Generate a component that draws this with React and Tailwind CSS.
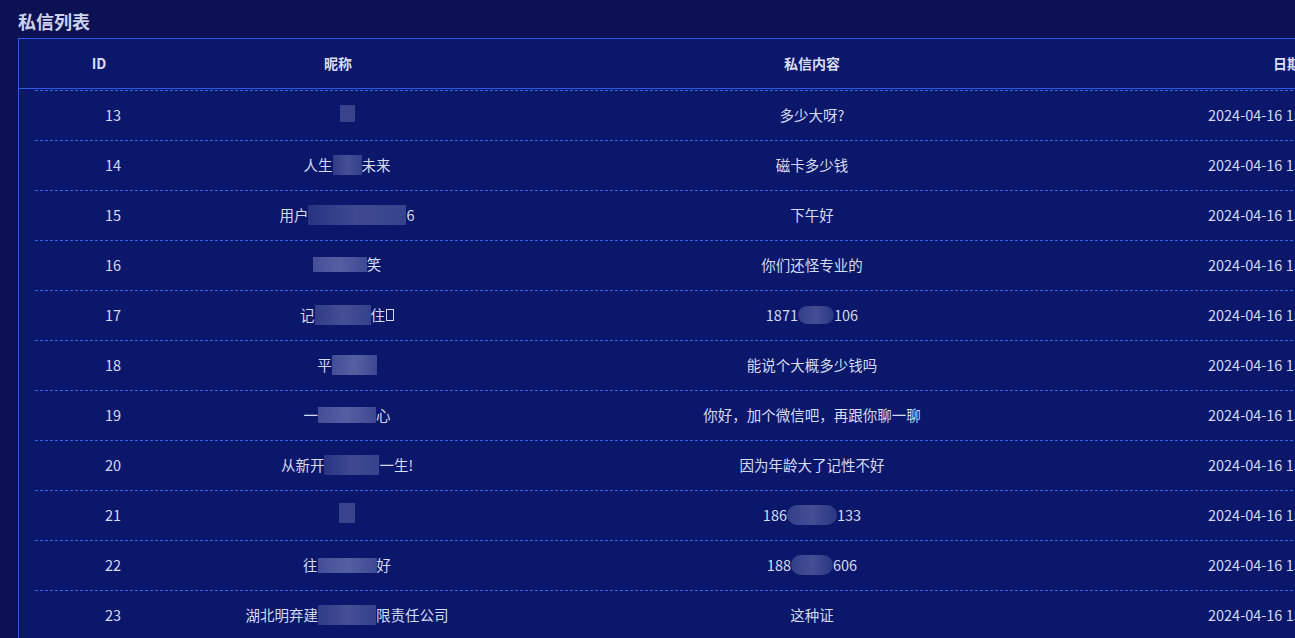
const rows = [
  { id: 13, name: [{ m: "w-[15px] h-[17px]", tone: "a" }], msg: ["多少大呀?"] },
  { id: 14, name: ["人生", { m: "w-[29px] h-[20px]", tone: "b" }, "未来"], msg: ["磁卡多少钱"] },
  { id: 15, name: ["用户", { m: "w-[98px] h-[20px]", tone: "c" }, "6"], msg: ["下午好"] },
  { id: 16, name: [{ m: "w-[54px] h-[15px]", tone: "d" }, "笑"], msg: ["你们还怪专业的"] },
  { id: 17, name: ["记", { m: "w-[56px] h-[20px]", tone: "b" }, "住", "box"], msg: ["1871", { m: "w-[36px] h-[18px] rounded-full", tone: "e" }, "106"] },
  { id: 18, name: ["平", { m: "w-[45px] h-[20px]", tone: "d" }], msg: ["能说个大概多少钱吗"] },
  { id: 19, name: ["一", { m: "w-[58px] h-[16px]", tone: "d" }, "心"], msg: ["你好，加个微信吧，再跟你聊一聊"] },
  { id: 20, name: ["从新开", { m: "w-[55px] h-[20px]", tone: "c" }, "一生!"], msg: ["因为年龄大了记性不好"] },
  { id: 21, name: [{ m: "w-[16px] h-[20px]", tone: "a" }], msg: ["186", { m: "w-[50px] h-[20px] rounded-full", tone: "e" }, "133"] },
  { id: 22, name: ["往", { m: "w-[59px] h-[15px]", tone: "d" }, "好"], msg: ["188", { m: "w-[42px] h-[20px] rounded-full", tone: "e" }, "606"] },
  { id: 23, name: ["湖北明弃建", { m: "w-[58px] h-[20px]", tone: "b" }, "限责任公司"], msg: ["这种证"] },
];

const tones = {
  a: "bg-[#3d4890]",
  b: "bg-gradient-to-r from-[#353f8a] via-[#4a5599] to-[#3a4590]",
  c: "bg-gradient-to-r from-[#2c3784] via-[#444f96] to-[#3b478f]",
  d: "bg-gradient-to-r from-[#4a549b] via-[#5d67a8] to-[#444e95]",
  e: "bg-gradient-to-r from-[#38438d] via-[#4a5498] to-[#2f3a86]",
};

function Cell({ parts }) {
  return (
    <span className="inline-flex items-center">
      {parts.map((p, i) => {
        if (p === "box")
          return <span key={i} className="inline-block w-[8px] h-[12px] border border-[#d5dbf0] ml-[1px]" />;
        if (typeof p === "string") return <span key={i}>{p}</span>;
        return <span key={i} className={`inline-block ${p.m} ${tones[p.tone]} opacity-90`} />;
      })}
    </span>
  );
}

export default function App() {
  return (
    <div
      className="h-[638px] w-[1295px] overflow-hidden bg-[#0b1152] text-[#d5dbf0]"
      style={{ fontFamily: '"Noto Sans CJK SC", "Noto Sans", sans-serif' }}
    >
      <h2 className="pl-[18px] pt-[9px] mb-[5px] text-[18px] leading-[24px] font-bold text-[#ccd2ea]">私信列表</h2>
      <div className="ml-[18px] w-[1480px] border-l border-t border-[#2a5be0] bg-[#0a176b]">
        <div className="flex h-[50px] items-center border-b border-[#2a5be0] pl-[16px] text-[14px] font-bold text-[#d9ddf0]">
          <div className="w-[128px] text-center">ID</div>
          <div className="w-[350px] text-center">昵称</div>
          <div className="w-[598px] text-center">私信内容</div>
          <div className="w-[352px] text-center">日期</div>
        </div>
        <div className="pl-[16px] pt-[1px] text-[14.5px] leading-[20px]">
          {rows.map((r) => (
            <div key={r.id} className="flex h-[50px] items-center pb-[1px] border-t border-dashed border-[#3366e6]">
              <div className="w-[156px] text-center">{r.id}</div>
              <div className="w-[312px] text-center">
                <Cell parts={r.name} />
              </div>
              <div className="w-[618px] text-center">
                <Cell parts={r.msg} />
              </div>
              <div className="w-[308px] text-center whitespace-nowrap">2024-04-16 15:32:08</div>
            </div>
          ))}
        </div>
      </div>
    </div>
  );
}
